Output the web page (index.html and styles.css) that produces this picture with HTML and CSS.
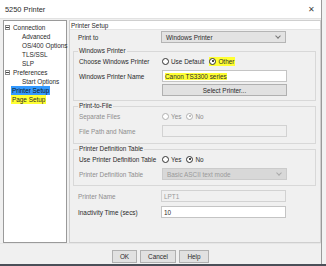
FILE: index.html
```html
<!DOCTYPE html>
<html>
<head>
<meta charset="utf-8">
<link rel="stylesheet" href="styles.css">
</head>
<body>
<div class="window">
  <div class="titlebar">
    <span class="title">5250 Printer</span>
    <span class="close">✕</span>
  </div>
  <div class="main">
    <div class="tree">
      <div class="node"><span class="box"></span><span>Connection</span></div>
      <div class="leaf">Advanced</div>
      <div class="leaf">OS/400 Options</div>
      <div class="leaf">TLS/SSL</div>
      <div class="leaf">SLP</div>
      <div class="node"><span class="box"></span><span>Preferences</span></div>
      <div class="leaf">Start Options</div>
      <div class="node plain"><span class="sel">Printer Setup</span></div>
      <div class="node plain"><span class="hl">Page Setup</span></div>
    </div>
    <div class="pane">
      <div class="pane-head">Printer Setup</div>
      <div class="pane-body">
        <div class="row">
          <span class="label">Print to</span>
          <div class="select"><span>Windows Printer</span><span class="chev"></span></div>
        </div>
        <div class="group g1">
          <div class="legend">Windows Printer</div>
          <div class="row">
            <span class="label">Choose Windows Printer</span>
            <div class="radios">
              <span class="radio"><span class="dot"></span>Use Default</span>
              <span class="radio"><span class="hl hlr"><span class="dot on"></span>Other</span></span>
            </div>
          </div>
          <div class="row r2">
            <span class="label">Windows Printer Name</span>
            <div class="input"><span class="hl">Canon TS3300 series</span></div>
          </div>
          <div class="row r3">
            <span class="label"></span>
            <div class="button wide">Select Printer...</div>
          </div>
        </div>
        <div class="group g2">
          <div class="legend">Print-to-File</div>
          <div class="row">
            <span class="label dis">Separate Files</span>
            <div class="radios dis">
              <span class="radio"><span class="dot"></span>Yes</span>
              <span class="radio"><span class="dot on"></span>No</span>
            </div>
          </div>
          <div class="row r2">
            <span class="label dis">File Path and Name</span>
            <div class="input disabled"></div>
          </div>
        </div>
        <div class="group g3">
          <div class="legend">Printer Definition Table</div>
          <div class="row">
            <span class="label">Use Printer Definition Table</span>
            <div class="radios">
              <span class="radio"><span class="dot"></span>Yes</span>
              <span class="radio"><span class="dot on"></span>No</span>
            </div>
          </div>
          <div class="row r2">
            <span class="label dis">Printer Definition Table</span>
            <div class="select disabled"><span>Basic ASCII text mode</span><span class="chev"></span></div>
          </div>
        </div>
        <div class="row r4">
          <span class="label dis">Printer Name</span>
          <div class="input disabled"><span>LPT1</span></div>
        </div>
        <div class="row r5">
          <span class="label">Inactivity Time (secs)</span>
          <div class="input"><span>10</span></div>
        </div>
      </div>
    </div>
  </div>
  <div class="footer">
    <div class="button ok">OK</div>
    <div class="button cancel">Cancel</div>
    <div class="button help">Help</div>
  </div>
</div>
</body>
</html>
```
FILE: styles.css
```css
* { box-sizing: border-box; }
html, body { margin: 0; padding: 0; }
body {
  width: 326px; height: 266px; overflow: hidden;
  background: linear-gradient(to bottom, #f2f2f2 264px, #4a4f58 264px);
  font-family: "Liberation Sans", Arial, sans-serif;
  font-size: 6.4px; color: #2a2a2a;
}
.window {
  width: 322px; height: 264px;
  background: #f0f0f0;
  display: flex; flex-direction: column;
  border-right: 1px solid #9a9a9a;
}
.titlebar {
  height: 19px; background: #ffffff;
  display: flex; align-items: center; justify-content: space-between;
  padding: 0 6px 0 5px;
  border-bottom: 1px solid #e2e2e2;
  font-size: 7.4px;
}
.close { font-size: 8px; color: #444; }
.main {
  display: flex; gap: 2px;
  padding: 1px 0 0 3px;
  height: 224px;
}
.tree {
  width: 64px; background: #fff;
  border: 1px solid #9a9a9a;
  padding-top: 2px;
}
.node, .leaf {
  height: 9px; line-height: 9px; display: flex; align-items: center;
  white-space: nowrap;
}
.node { padding-left: 1px; }
.node.plain { padding-left: 7px; }
.leaf { padding-left: 18px; }
.box {
  width: 5px; height: 5px; border: 1px solid #8a8a8a; margin-right: 3px;
  position: relative; background: #fff;
}
.box::after {
  content: ""; position: absolute; left: 0; top: 1px; width: 3px; height: 1px; background: #444;
}
.sel { background: #3399ff; color: #101820; padding: 0 1px; line-height: 9px; }
.hl { background: #ffff33; }
.tree .hl { padding: 0 1px; line-height: 9px; }
.hlr { display: inline-flex; align-items: center; gap: 2px; padding: 1px 1px 1px 0; }
.pane {
  flex: 1; border: 1px solid #cfcfcf;
  display: flex; flex-direction: column;
}
.pane-head {
  height: 9px; line-height: 9px; background: #fff; padding-left: 1px;
  border-bottom: 1px solid #e4e4e4;
}
.pane-body { padding: 1px 3px 0 3px; }
.row {
  display: flex; align-items: center; height: 12px;
}
.label { width: 88px; padding-left: 5px; white-space: nowrap; flex: none; }
.dis { color: #8d8d8d; }
.select, .input, .button.wide {
  width: 125px; height: 12px; flex: none;
  display: flex; align-items: center;
}
.button.wide { justify-content: center; }
.select {
  background: #e3e3e3; border: 1px solid #b5b5b5; padding: 0 4px;
  justify-content: space-between;
}
.chev {
  width: 4px; height: 4px; border-right: 1px solid #777; border-bottom: 1px solid #777;
  transform: rotate(45deg); margin-top: -3px; margin-right: 1px;
}
.select.disabled { background: #d8d8d8; border-color: #cbcbcb; color: #9a9a9a; }
.select.disabled .chev { border-color: #aaa; }
.input { background: #fff; border: 1px solid #c4c4c4; padding: 0 2px; }
.input.disabled { background: #f0f0f0; border-color: #d2d2d2; color: #9a9a9a; }
.button {
  background: #e1e1e1; border: 1px solid #b0b0b0;
  display: flex; align-items: center; justify-content: center;
  height: 13px;
}
.group {
  border: 1px solid #d8d8d8; margin-right: 1px;
}
.legend {
  width: fit-content; margin: -5px 0 0 4px; padding: 0 1px; background: #f0f0f0;
  line-height: 8px; height: 8px;
}
.g1 { margin-top: 8px; padding-bottom: 4px; }
.g1 > .row:first-of-type, .g2 > .row:first-of-type, .g3 > .row:first-of-type { margin-top: 4px; }
.r2 { margin-top: 3px; }
.r3 { margin-top: 2px; }
.g2 { margin-top: 5px; padding-bottom: 6px; }
.g3 { margin-top: 5px; padding-bottom: 5px; }
.r4 { margin-top: 4px; }
.r5 { margin-top: 4px; }
.radios { display: flex; gap: 5px; align-items: center; }
.radio { display: flex; align-items: center; gap: 2px; }
.dot {
  width: 7px; height: 7px; border-radius: 50%; border: 1px solid #333; background: #fff;
  display: inline-block; position: relative;
}
.dot.on::after {
  content: ""; position: absolute; left: 1.5px; top: 1.5px; width: 2px; height: 2px; border-radius: 50%; background: #111;
}
.radios.dis .dot { border-color: #b0b0b0; }
.radios.dis .dot.on::after { background: #aaa; }
.footer {
  flex: 1; display: flex; justify-content: center; align-items: center; gap: 3px;
  border-top: 1px solid #e6e6e6; padding-top: 4px;
}
.ok { width: 25px; }
.cancel { width: 36px; }
.help { width: 30px; }
```
